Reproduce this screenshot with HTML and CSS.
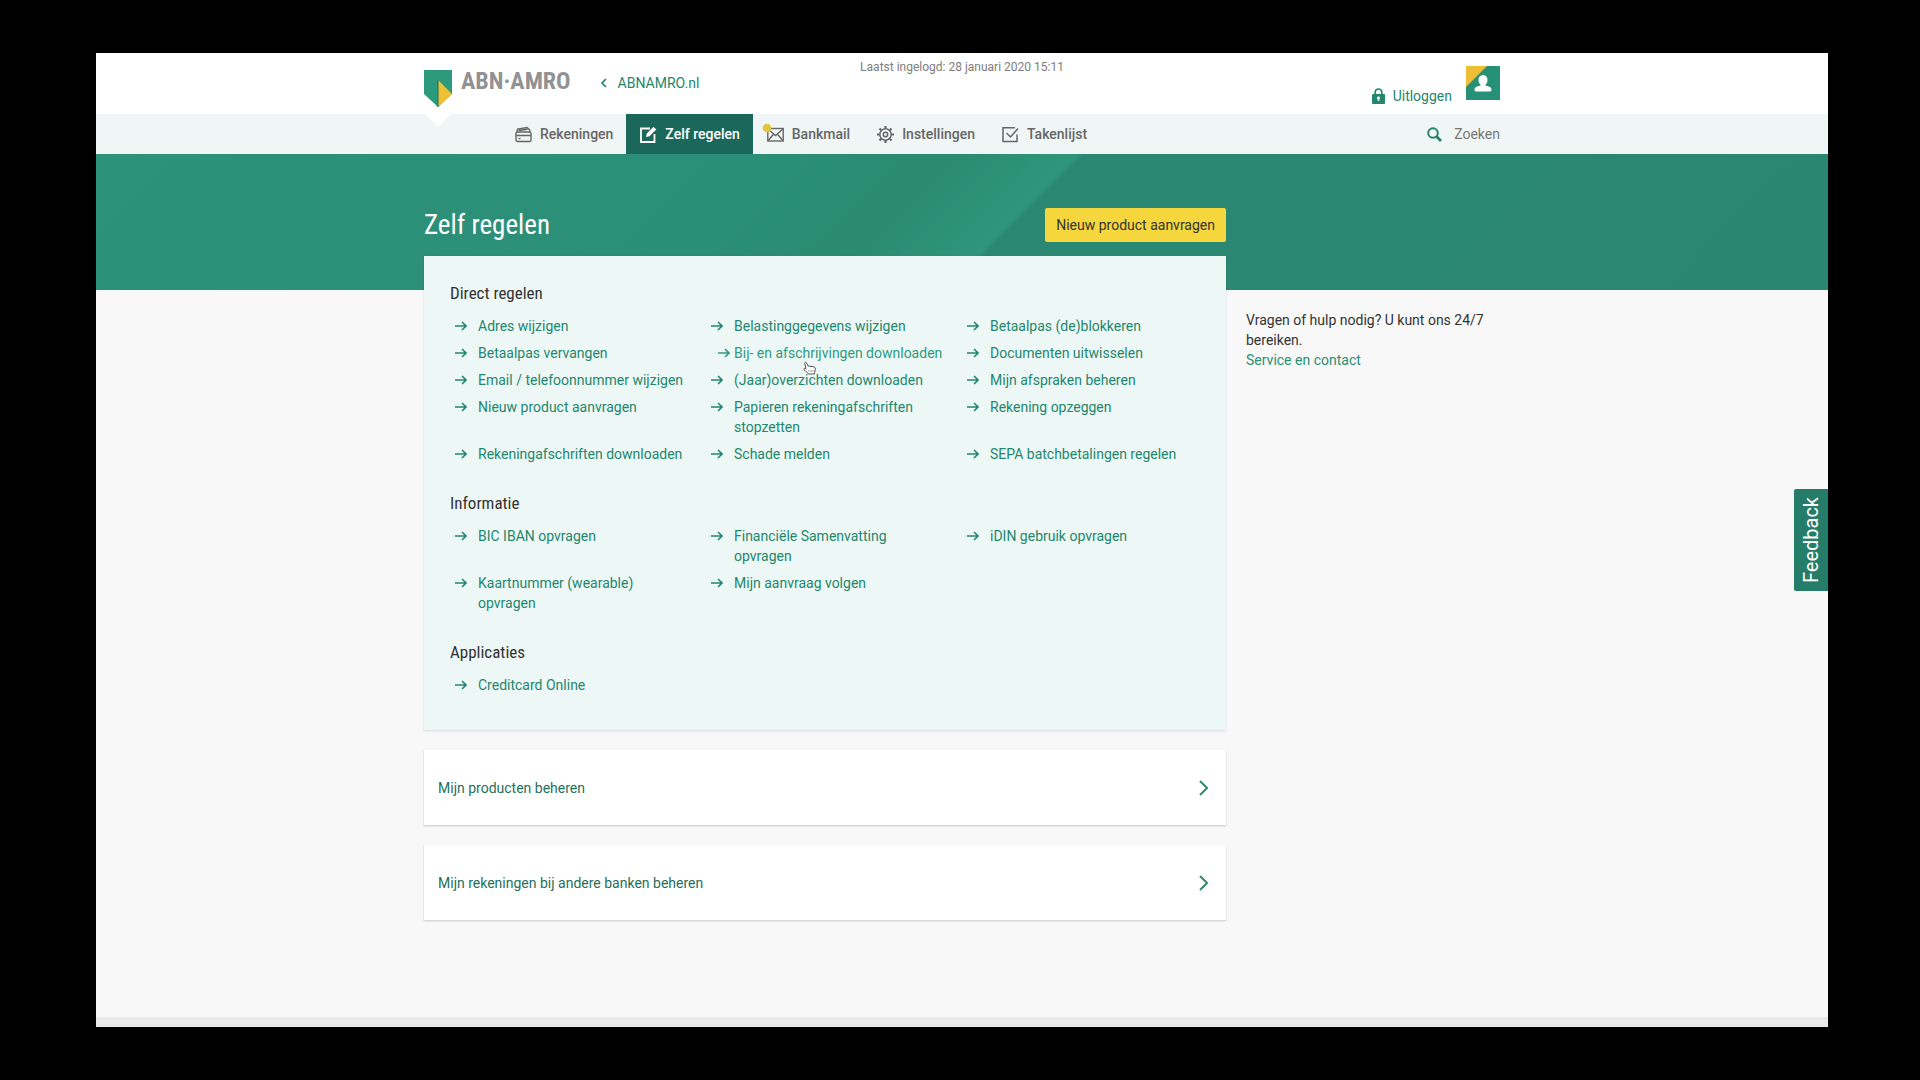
FILE: index.html
```html
<!DOCTYPE html>
<html lang="nl">
<head>
<meta charset="utf-8">
<meta name="viewport" content="width=device-width, initial-scale=1">
<title>Zelf regelen - ABN AMRO</title>
<link rel="stylesheet" href="styles.css">
</head>
<body>
<svg class="sprite" aria-hidden="true">
  <symbol id="arrow" viewBox="0 0 12 10"><path d="M0 5h11M7 1l4 4-4 4" fill="none" stroke="currentColor" stroke-width="1.6"/></symbol>
  <symbol id="chevron" viewBox="0 0 9 16"><path d="M1 1l7 7-7 7" fill="none" stroke="currentColor" stroke-width="2"/></symbol>
</svg>
<div class="screen">
  <header class="topbar">
    <div class="container topbar-inner">
      <div class="topbar-left">
        <a class="brand" href="#">
          <svg class="shield" viewBox="0 0 28 57" aria-hidden="true">
            <path d="M1 44h26L14 57z" fill="#fff"/>
            <path d="M0 0h28v24L14 37 0 24z" fill="#2c9a7c"/>
            <path d="M14 10l14 14-14 13z" fill="#f0c030"/>
            <path d="M14 10v27" stroke="#1d6f5c" stroke-width="1"/>
          </svg>
          <span class="brand-name">ABN·AMRO</span>
        </a>
        <a class="back" href="#">
          <svg class="back-icon" viewBox="0 0 6 10" aria-hidden="true"><path d="M5 1L1 5l4 4" fill="none" stroke="currentColor" stroke-width="1.7"/></svg>
          ABNAMRO.nl
        </a>
      </div>
      <p class="last-login">Laatst ingelogd: 28 januari 2020 15:11</p>
      <div class="account">
        <a class="logout" href="#">
          <svg class="lock" viewBox="0 0 13 16" aria-hidden="true"><path d="M3.2 7V4.3a3.3 3.3 0 0 1 6.6 0V7" fill="none" stroke="currentColor" stroke-width="1.7"/><rect y="6" width="13" height="10" rx="1" fill="currentColor"/><path d="M6.5 9v4" stroke="#fff" stroke-width="1.6"/><circle cx="6.5" cy="9.8" r="1.4" fill="#fff"/></svg>
          Uitloggen
        </a>
        <button class="avatar" type="button" aria-label="Profiel">
          <svg viewBox="0 0 34 34" aria-hidden="true"><path d="M0 0h34v34H0z" fill="#279177"/><path d="M0 0h21L0 21z" fill="#eebf35"/><path d="M17 9c3 0 4.500 2.200 4.500 5 0 2.200-1 4-2.300 5 .2 1.200 6.300 1 6.300 4.500 0 1-.5 2-1.500 2H10c-1 0-1.500-1-1.500-2 0-3.500 6.100-3.300 6.300-4.500-1.300-1-2.300-2.800-2.300-5 0-2.800 1.500-5 4.500-5z" fill="#fff"/></svg>
        </button>
      </div>
    </div>
  </header>

  <nav class="nav">
    <div class="container nav-inner">
      <a class="nav-item" href="#">
        <svg class="nav-icon" viewBox="0 0 17 17" aria-hidden="true"><g fill="none" stroke="currentColor" stroke-width="1.4"><rect x="1" y="6" width="15" height="9.500" rx="1.500"/><path d="M2 6l.5-3 9.500-1.500 2.500 2.200.5 2.300M3.500 4.500l9-1.200M1 9.500h15"/><path d="M3.500 12.500h2"/></g></svg>
        Rekeningen
      </a>
      <a class="nav-item nav-item-active" href="#" aria-current="page">
        <svg class="nav-icon" viewBox="0 0 17 17" aria-hidden="true"><path d="M10 2.500H1v13.500h13.500V8" fill="none" stroke="currentColor" stroke-width="1.800"/><path d="M6 11l.8-3.500L13.500.8l2.800 2.600-6.800 6.900z" fill="currentColor"/></svg>
        Zelf regelen
      </a>
      <a class="nav-item" href="#">
        <svg class="nav-icon" viewBox="0 0 17 17" aria-hidden="true"><g fill="none" stroke="currentColor" stroke-width="1.400"><rect x=".8" y="2.500" width="15.400" height="12.500"/><path d="M1 3l7.500 6.500L16 3M1 14.800l5.500-6.500M16 14.800l-5.500-6.500"/></g><circle cx="0" cy="2" r="4.300" fill="#e2c63c"/></svg>
        Bankmail
      </a>
      <a class="nav-item" href="#">
        <svg class="nav-icon" viewBox="0 0 17 17" aria-hidden="true"><g fill="none" stroke="currentColor"><circle cx="8.500" cy="8.500" r="5.700" stroke-width="1.500"/><circle cx="8.500" cy="8.500" r="2.200" stroke-width="1.500"/><path d="M8.500 0v2.500M8.500 14.500V17M0 8.500h2.500M14.500 8.500H17M2.500 2.500l1.700 1.700M12.800 12.800l1.700 1.700M14.500 2.500l-1.700 1.700M4.200 12.800l-1.700 1.700" stroke-width="2.200"/></g></svg>
        Instellingen
      </a>
      <a class="nav-item" href="#">
        <svg class="nav-icon" viewBox="0 0 17 17" aria-hidden="true"><path d="M13 1.700H1v13.800h14V8.500M4.500 7l4 4L16 2.500" fill="none" stroke="currentColor" stroke-width="1.500"/></svg>
        Takenlijst
      </a>
      <a class="search" href="#">
        <svg class="search-icon" viewBox="0 0 15 15" aria-hidden="true"><circle cx="6" cy="6" r="4.800" fill="none" stroke="currentColor" stroke-width="2"/><path d="M9.500 9.500l4.500 4.500" stroke="currentColor" stroke-width="2.800"/></svg>
        Zoeken
      </a>
    </div>
  </nav>

  <section class="hero">
    <div class="container">
      <div class="hero-row">
        <h1 class="title">Zelf regelen</h1>
        <button class="cta" type="button">Nieuw product aanvragen</button>
      </div>
    </div>
  </section>

  <div class="container content">
    <main class="main-column">
      <div class="panel">
        <section class="group">
          <h2 class="group-title">Direct regelen</h2>
          <ul class="links">
            <li><a class="link" href="#"><svg class="arrow" aria-hidden="true"><use href="#arrow"/></svg>Adres wijzigen</a></li>
            <li><a class="link" href="#"><svg class="arrow" aria-hidden="true"><use href="#arrow"/></svg>Belastinggegevens wijzigen</a></li>
            <li><a class="link" href="#"><svg class="arrow" aria-hidden="true"><use href="#arrow"/></svg>Betaalpas (de)blokkeren</a></li>
            <li><a class="link" href="#"><svg class="arrow" aria-hidden="true"><use href="#arrow"/></svg>Betaalpas vervangen</a></li>
            <li><a class="link link-hovered" href="#"><svg class="arrow" aria-hidden="true"><use href="#arrow"/></svg>Bij- en afschrijvingen downloaden<svg class="pointer" viewBox="0 0 13 14" aria-hidden="true"><path d="M3 7.500L1.700 2.500C1.400 1.200 3 .6 3.500 1.800L5 5l5 .6c1.500.2 2.300 1 2.300 2.400 0 1.500-.8 2.500-.8 5H5.500C4.500 11 2.500 10.500 1 8.700.5 7.500 1.500 6.900 3 7.500z" fill="#fff" stroke="#555" stroke-width="1"/><path d="M6 9v2M8 9v2M10 9v2" stroke="#888" stroke-width=".8"/></svg></a></li>
            <li><a class="link" href="#"><svg class="arrow" aria-hidden="true"><use href="#arrow"/></svg>Documenten uitwisselen</a></li>
            <li><a class="link" href="#"><svg class="arrow" aria-hidden="true"><use href="#arrow"/></svg>Email / telefoonnummer wijzigen</a></li>
            <li><a class="link" href="#"><svg class="arrow" aria-hidden="true"><use href="#arrow"/></svg>(Jaar)overzichten downloaden</a></li>
            <li><a class="link" href="#"><svg class="arrow" aria-hidden="true"><use href="#arrow"/></svg>Mijn afspraken beheren</a></li>
            <li><a class="link" href="#"><svg class="arrow" aria-hidden="true"><use href="#arrow"/></svg>Nieuw product aanvragen</a></li>
            <li><a class="link" href="#"><svg class="arrow" aria-hidden="true"><use href="#arrow"/></svg>Papieren rekeningafschriften stopzetten</a></li>
            <li><a class="link" href="#"><svg class="arrow" aria-hidden="true"><use href="#arrow"/></svg>Rekening opzeggen</a></li>
            <li><a class="link" href="#"><svg class="arrow" aria-hidden="true"><use href="#arrow"/></svg>Rekeningafschriften downloaden</a></li>
            <li><a class="link" href="#"><svg class="arrow" aria-hidden="true"><use href="#arrow"/></svg>Schade melden</a></li>
            <li><a class="link" href="#"><svg class="arrow" aria-hidden="true"><use href="#arrow"/></svg>SEPA batchbetalingen regelen</a></li>
          </ul>
        </section>
        <section class="group">
          <h2 class="group-title">Informatie</h2>
          <ul class="links">
            <li><a class="link" href="#"><svg class="arrow" aria-hidden="true"><use href="#arrow"/></svg>BIC IBAN opvragen</a></li>
            <li><a class="link" href="#"><svg class="arrow" aria-hidden="true"><use href="#arrow"/></svg>Financiële Samenvatting opvragen</a></li>
            <li><a class="link" href="#"><svg class="arrow" aria-hidden="true"><use href="#arrow"/></svg>iDIN gebruik opvragen</a></li>
            <li><a class="link" href="#"><svg class="arrow" aria-hidden="true"><use href="#arrow"/></svg>Kaartnummer (wearable) opvragen</a></li>
            <li><a class="link" href="#"><svg class="arrow" aria-hidden="true"><use href="#arrow"/></svg>Mijn aanvraag volgen</a></li>
          </ul>
        </section>
        <section class="group">
          <h2 class="group-title">Applicaties</h2>
          <ul class="links">
            <li><a class="link" href="#"><svg class="arrow" aria-hidden="true"><use href="#arrow"/></svg>Creditcard Online</a></li>
          </ul>
        </section>
      </div>
      <a class="card" href="#">Mijn producten beheren<svg class="chevron" aria-hidden="true"><use href="#chevron"/></svg></a>
      <a class="card" href="#">Mijn rekeningen bij andere banken beheren<svg class="chevron" aria-hidden="true"><use href="#chevron"/></svg></a>
    </main>
    <aside class="help">
      <p class="help-text">Vragen of hulp nodig? U kunt ons 24/7 bereiken.</p>
      <a class="help-link" href="#">Service en contact</a>
    </aside>
  </div>

  <footer class="footer"></footer>
  <button class="feedback" type="button"><span class="feedback-label">Feedback</span></button>
</div>
</body>
</html>
```
FILE: styles.css
```css
*, *::before, *::after { box-sizing: border-box; }

body {
  margin: 0;
  min-height: 100vh;
  padding: 53px 92px 53px 96px;
  background: #000;
  color: #333;
  font: 14px/20px Roboto, "Liberation Sans", sans-serif;
}

a { color: inherit; text-decoration: none; }
p, h1, h2, ul { margin: 0; padding: 0; }
ul { list-style: none; }
button { border: 0; padding: 0; font: inherit; cursor: pointer; }
svg { display: block; flex: none; overflow: visible; }

.sprite { position: absolute; width: 0; height: 0; }

.screen {
  position: relative;
  display: flex;
  flex-direction: column;
  min-height: calc(100vh - 106px);
  background: #f8f8f8;
}

.container { width: 100%; max-width: 1076px; margin: 0 auto; }

/* Top bar */
.topbar { position: relative; z-index: 1; height: 61px; background: #fff; }
.topbar-inner { display: grid; grid-template-columns: 1fr auto 1fr; align-items: start; }
.topbar-left { display: flex; align-items: flex-start; gap: 30px; padding-top: 17px; color: #23866d; }
.brand { display: flex; gap: 9px; height: 28px; }
.shield { width: 28px; height: 57px; }
.brand-name {
  color: #929292;
  font: bold 24px/22px "Roboto Condensed", "Liberation Sans Narrow", Roboto, sans-serif;
}
.back { display: flex; align-items: center; gap: 11px; padding-top: 3px; }
.back-icon { width: 6px; height: 10px; }
.last-login { padding-top: 4px; color: #7d7d7d; font-size: 12px; }
.account { display: flex; justify-content: flex-end; gap: 14px; padding-top: 13px; }
.logout { display: flex; align-items: center; gap: 8px; padding-top: 20px; color: #23866d; }
.lock { width: 13px; height: 16px; }
.avatar { width: 34px; height: 34px; background: none; }

/* Navigation */
.nav { background: #f0f6f5; }
.nav-inner { display: flex; height: 40px; padding-left: 77px; }
.nav-item {
  display: flex;
  align-items: center;
  gap: 8px;
  padding: 0 13px 0 14px;
  color: #666;
  font-weight: 500;
}
.nav-item-active { background: #1b675a; color: #fff; }
.nav-icon { width: 17px; height: 17px; }
.search { display: flex; align-items: center; gap: 12px; margin-left: auto; color: #777; }
.search-icon { width: 15px; height: 15px; color: #23806a; }

/* Hero */
.hero {
  height: 136px;
  background: linear-gradient(135deg, #2e917a 0%, #2b8e76 38%, #2a8a72 46%, #2f967c 52.5%, #2a8872 53%, #2a8670 100%);
}
.hero-row { display: flex; align-items: center; justify-content: space-between; max-width: 802px; padding-top: 54px; }
.title { color: #fff; font: 400 27px/34px "Roboto Condensed", "Liberation Sans Narrow", Roboto, sans-serif; }
.cta { height: 34px; padding: 0 11px; border-radius: 2px; background: #f5d63d; color: #333; }

/* Content */
.content { display: flex; flex: 1; align-items: flex-start; gap: 20px; }
.main-column {
  display: flex;
  flex: 0 1 802px;
  flex-direction: column;
  gap: 20px;
  margin-top: -34px;
}
.panel {
  display: flex;
  flex-direction: column;
  gap: 27px;
  padding: 25px 8px 35px 26px;
  background: #edf8f6;
  box-shadow: 0 1px 2px rgba(0, 0, 0, 0.12);
}
.group-title {
  margin-bottom: 11px;
  font: 400 17px/24px "Roboto Condensed", "Liberation Sans Narrow", Roboto, sans-serif;
}
.links { display: grid; grid-template-columns: repeat(3, minmax(0, 1fr)); row-gap: 7px; color: #23866d; }
.link { position: relative; display: flex; gap: 11px; padding: 0 17px 0 5px; }
.arrow { width: 12px; height: 10px; margin-top: 5px; }
.link-hovered { color: #2f9a7e; gap: 4px; padding-left: 12px; }
.pointer { position: absolute; left: 97px; top: 18px; width: 13px; height: 14px; }

.card {
  display: flex;
  align-items: center;
  justify-content: space-between;
  height: 75px;
  padding: 0 18px 0 14px;
  background: #fff;
  box-shadow: 0 1px 2px rgba(0, 0, 0, 0.2);
  color: #1f705c;
}
.chevron { width: 9px; height: 16px; color: #2f8a70; }

.help { flex: 1; padding-top: 20px; }
.help-link { color: #2a9072; }

.footer { height: 10px; background: #e9e9e9; }

.feedback {
  position: absolute;
  right: 0;
  top: 436px;
  display: flex;
  align-items: center;
  justify-content: center;
  width: 34px;
  height: 102px;
  border-radius: 2px 0 0 2px;
  background: #257d69;
  color: #fff;
  font-size: 20px;
}
.feedback-label { writing-mode: vertical-rl; transform: rotate(180deg); line-height: 34px; }
```
